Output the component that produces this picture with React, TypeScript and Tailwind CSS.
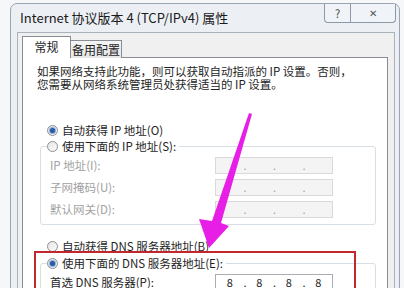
import React from 'react'

const font = { fontFamily: '"Noto Sans CJK SC", "Noto Sans", sans-serif' }

function Radio({ checked }: { checked?: boolean }) {
  return (
    <span className="flex h-[11px] w-[11px] shrink-0 items-center justify-center rounded-full border border-[#8e8f8f] bg-gradient-to-br from-[#e6e6e6] to-[#fbfbfb]">
      {checked && <span className="h-[5px] w-[5px] rounded-full bg-[#2d5aa0] shadow-[0_0_1px_1px_#7ea7d8]" />}
    </span>
  )
}

function RadioRow({ checked, label }: { checked?: boolean; label: string }) {
  return (
    <div className="flex h-[16px] items-center gap-[4px] text-[#1e1e1e]">
      <Radio checked={checked} />
      <span>{label}</span>
    </div>
  )
}

function IpBox({ value, disabled }: { value?: string[]; disabled?: boolean }) {
  const parts = value ?? ['', '', '', '']
  return (
    <div
      className={
        'flex h-[17px] w-[118px] items-center border text-[11px] ' +
        (disabled ? 'border-[#d9d9d9] bg-[#f4f4f4] text-[#a0a0a0]' : 'border-[#abadb3] bg-white text-[#1e1e1e]')
      }
    >
      {parts.map((p, i) => (
        <React.Fragment key={i}>
          <span className="w-[28px] text-center leading-none">{p}</span>
          {i < 3 && <span className="w-[2px] text-center leading-none">.</span>}
        </React.Fragment>
      ))}
    </div>
  )
}

function FieldRow({ label, disabled, value }: { label: string; disabled?: boolean; value?: string[] }) {
  return (
    <div className="flex h-[16px] items-center">
      <span className={'w-[165px] ' + (disabled ? 'text-[#a2a2a2]' : 'text-[#1e1e1e]')}>{label}</span>
      <IpBox disabled={disabled} value={value} />
    </div>
  )
}

export default function App() {
  return (
    <div className="relative h-[288px] w-[404px] overflow-hidden bg-[#f6f7f9] text-[11.5px] leading-[12px]" style={font}>
      <div className="ml-[10px] mr-[4px] mt-[3px] flex h-[300px] flex-col rounded-t-[7px] border border-[#9aa5b2] bg-[#ecf0f5]">
        {/* title bar */}
        <div className="flex h-[28px] items-start justify-between">
          <span className="pl-[9px] pt-[7px] text-[13px] leading-[14px] text-[#1a1a1a]">
            Internet 协议版本 4 (TCP/IPv4) 属性
          </span>
          <div className="mr-[3px] flex">
            <div className="flex h-[19px] w-[27px] items-center justify-center rounded-bl-[4px] border border-t-0 border-[#8e99a6] bg-[#f0f3f7] text-[11px] text-[#444]">
              ?
            </div>
            <div className="flex h-[19px] w-[45px] items-center justify-center rounded-br-[4px] border border-l-0 border-t-0 border-[#8e99a6] bg-[#f0f3f7] text-[10px] text-[#555]">
              ✕
            </div>
          </div>
        </div>

        {/* dialog body */}
        <div className="ml-[6px] mr-[4px] flex-1 border border-[#aab2bc] bg-[#f0f0f0] px-[4px] pt-[3px]">
          <div className="flex items-end">
            <div className="relative z-10 flex h-[22px] w-[49px] items-center justify-center border border-b-0 border-[#898c95] bg-white pb-[1px] text-[12px] text-[#1e1e1e]">
              常规
            </div>
            <div className="flex h-[18px] w-[51px] items-center justify-center border border-b-0 border-l-0 border-[#898c95] bg-gradient-to-b from-[#f4f4f4] to-[#e6e6e6] pt-[1px] text-[12px] text-[#1e1e1e]">
              备用配置
            </div>
          </div>

          <div className="-mt-[1px] h-[240px] w-[366px] border border-[#898c95] bg-white pl-[14px] pt-[7px]">
            <p className="leading-[13px] text-[#1e1e1e]">
              如果网络支持此功能，则可以获取自动指派的 IP 设置。否则，
              <br />
              您需要从网络系统管理员处获得适当的 IP 设置。
            </p>

            <div className="mt-[31px] pl-[10px]">
              <RadioRow checked label="自动获得 IP 地址(O)" />
            </div>

            <fieldset className="ml-[3px] w-[336px] rounded-[3px] border border-[#d5dfe5] pb-[7px] pl-[9px]">
              <legend className="-ml-[3px] pr-[3px]">
                <RadioRow label="使用下面的 IP 地址(S):" />
              </legend>
              <div className="mt-[3px] flex flex-col gap-[6px]">
                <FieldRow disabled label="IP 地址(I):" />
                <FieldRow disabled label="子网掩码(U):" />
                <FieldRow disabled label="默认网关(D):" />
              </div>
            </fieldset>

            <div className="mt-[13px] pl-[10px]">
              <RadioRow label="自动获得 DNS 服务器地址(B)" />
            </div>

            <fieldset className="ml-[3px] mt-[1px] w-[336px] rounded-[3px] border border-[#d5dfe5] pb-[7px] pl-[9px]">
              <legend className="-ml-[3px] pr-[3px]">
                <RadioRow checked label="使用下面的 DNS 服务器地址(E):" />
              </legend>
              <div className="mt-[3px] flex flex-col gap-[6px]">
                <FieldRow label="首选 DNS 服务器(P):" value={['8', '8', '8', '8']} />
              </div>
            </fieldset>
          </div>
        </div>
      </div>

      {/* red highlight */}
      <div className="absolute left-[34px] top-[251px] h-[50px] w-[322px] border-2 border-[#c1272d]" />

      {/* magenta arrow */}
      <svg className="absolute left-0 top-0" width="404" height="288" viewBox="0 0 404 288">
        <polygon points="249,113 252,114 221,223 229,226 209,248 199,219 212,221" fill="#e61ee6" />
      </svg>
    </div>
  )
}
